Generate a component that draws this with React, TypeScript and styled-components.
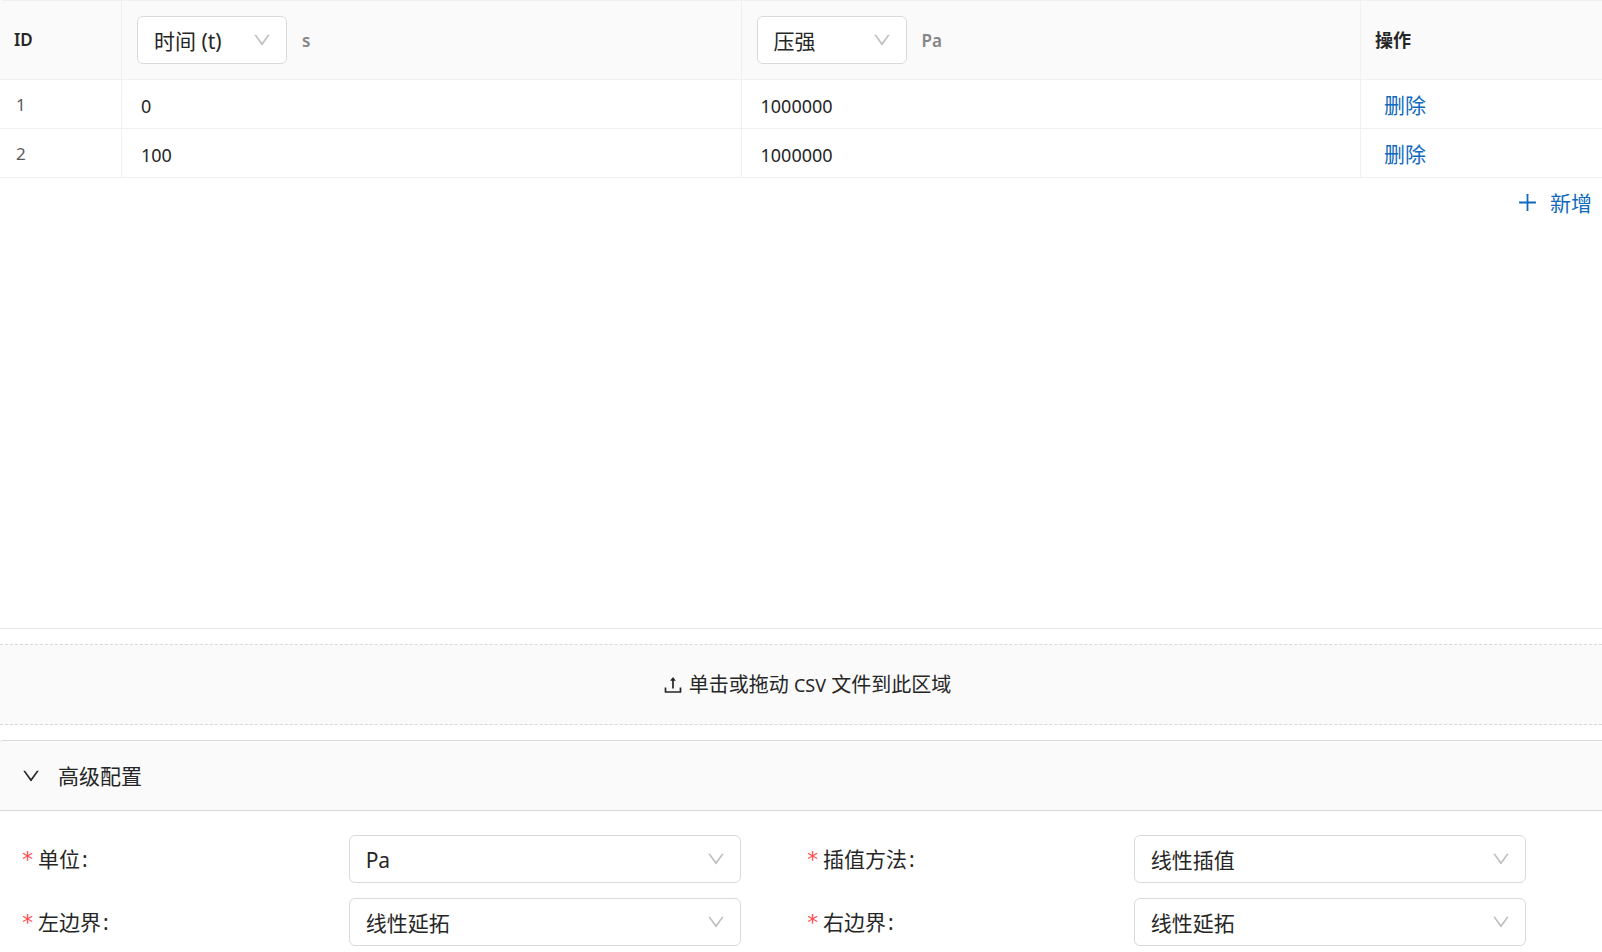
import React, { useState } from 'react';
import styled, { createGlobalStyle } from 'styled-components';

const GlobalStyle = createGlobalStyle`
  *, *::before, *::after { box-sizing: border-box; }
  body {
    margin: 0;
    background: #fff;
    color: #262626;
    font-family: "Noto Sans", "Noto Sans CJK SC", sans-serif;
    font-size: 21px;
    line-height: 32px;
  }
  button, input, select { font: inherit; color: inherit; }
`;

const Page = styled.div`
  display: flex;
  flex-direction: column;
  min-height: 100vh;
  padding-bottom: 6px;
`;

const TableArea = styled.section`
  flex: 1;
  border-bottom: 1px solid #e8e8e8;
`;

const DataTable = styled.table`
  width: 100%;
  table-layout: fixed;
  border-collapse: separate;
  border-spacing: 0;
  border-top: 1px solid #f0f0f0;
  border-radius: 3px 0 0 0;
  overflow: hidden;
`;

const Col = styled.col<{ $width?: number }>`
  width: ${({ $width }) => ($width ? `${$width}px` : 'auto')};
`;

const HeadCell = styled.th<{ $latin?: boolean }>`
  height: 79px;
  padding: 0 14px;
  background: #fafafa;
  border-bottom: 1px solid #f0f0f0;
  border-right: 1px solid #f0f0f0;
  font-size: ${({ $latin }) => ($latin ? 17 : 18)}px;
  font-weight: 600;
  text-align: left;
  &:last-child { border-right: 0; }
`;

const HeadGroup = styled.div`
  display: flex;
  align-items: center;
  gap: 15px;
  padding-left: 1px;
`;

const Unit = styled.span`
  padding-top: 2px;
  color: #858585;
  font-size: 17px;
`;

const Cell = styled.td`
  height: 49px;
  padding: 0 15px;
  border-bottom: 1px solid #f0f0f0;
  border-right: 1px solid #f0f0f0;
  &:last-child { border-right: 0; }
`;

const RowNumber = styled(Cell)`
  padding: 2px 16px 0;
  color: #595959;
  font-size: 17px;
  line-height: 24px;
`;

const CellInput = styled.input`
  display: block;
  width: 100%;
  height: 32px;
  padding: 3px 4px 0;
  border: 0;
  outline: 0;
  background: transparent;
  font-size: 18px;
`;

const TextButton = styled.button`
  display: inline-flex;
  align-items: center;
  gap: 12px;
  height: 48px;
  padding: 2px 8px 0;
  border: 0;
  background: none;
  color: #0f69bd;
  cursor: pointer;
  svg { margin-bottom: 2px; }
`;

const AddBar = styled.div`
  display: flex;
  justify-content: flex-end;
  padding-right: 2px;
`;

const SelectBox = styled.div<{ $width?: string }>`
  position: relative;
  width: ${({ $width }) => $width ?? '100%'};
`;

const NativeSelect = styled.select`
  display: block;
  width: 100%;
  height: 48px;
  padding: 1px 42px 0 16px;
  appearance: none;
  border: 1px solid #d9d9d9;
  border-radius: 6px;
  background: #fff;
  font-size: 21px;
  font-weight: 400;
`;

const SelectArrow = styled.span`
  position: absolute;
  top: 15px;
  right: 16px;
  display: flex;
  color: #bfbfbf;
  pointer-events: none;
`;

const Dropzone = styled.button`
  display: flex;
  align-items: center;
  justify-content: center;
  gap: 6px;
  width: 100%;
  height: 81px;
  margin: 15px 0;
  padding: 0 0 0 12px;
  border: 1px dashed #d9d9d9;
  border-width: 1px 0;
  background: #fafafa;
  font-size: 20px;
  cursor: pointer;
`;

const Latin = styled.span`
  font-size: 18px;
`;

const PanelHeader = styled.button`
  display: flex;
  align-items: center;
  gap: 18px;
  width: 100%;
  height: 71px;
  padding: 0 22px;
  border: 1px solid #d9d9d9;
  border-width: 1px 0;
  border-radius: 3px 0 0 0;
  background: #fafafa;
  text-align: left;
  cursor: pointer;
`;

const Form = styled.form`
  display: grid;
  grid-template-columns: 1fr 1fr;
  gap: 15px 1px;
  padding: 24px 11px 0 22px;
`;

const Field = styled.div`
  display: grid;
  grid-template-columns: 5fr 6fr 1fr;
  align-items: center;
`;

const Label = styled.label`
  display: flex;
  align-items: center;
`;

const Required = styled.span`
  width: 16px;
  color: #ff4d4f;
  font-family: "DejaVu Sans Mono", monospace;
  font-size: 22px;
  line-height: 24px;
  padding-top: 2px;
  margin-left: -1px;
  margin-right: 1px;
`;

const Colon = styled.span`
  padding-left: 2px;
`;

type IconProps = { size: number; paths: string[] };

const Icon = ({ size, paths }: IconProps) => (
  <svg width={size} height={size} viewBox="64 64 896 896" fill="currentColor" aria-hidden="true">
    {paths.map((d) => (
      <path key={d} d={d} />
    ))}
  </svg>
);

const DOWN = [
  'M884 256h-75c-5.1 0-9.9 2.5-12.9 6.6L512 654.2 227.9 262.6c-3-4.1-7.8-6.6-12.9-6.6h-75c-6.5 0-10.3 7.4-6.5 12.7l352.6 486.1c12.8 17.6 39 17.6 51.7 0l352.6-486.1c3.9-5.3.1-12.7-6.4-12.7z',
];
const PLUS = [
  'M482 152h60q8 0 8 8v704q0 8-8 8h-60q-8 0-8-8V160q0-8 8-8z',
  'M160 474h704q8 0 8 8v60q0 8-8 8H160q-8 0-8-8v-60q0-8 8-8z',
];
const UPLOAD = [
  'M400 317.7h73.9V656c0 4.4 3.6 8 8 8h60c4.4 0 8-3.6 8-8V317.7H624c6.7 0 10.4-7.7 6.3-12.9L518.3 163a8 8 0 0 0-12.6 0l-112 141.7c-4.1 5.3-.4 13 6.3 13z',
  'M878 626h-60c-4.4 0-8 3.6-8 8v154H214V634c0-4.4-3.6-8-8-8h-60c-4.4 0-8 3.6-8 8v198c0 17.7 14.3 32 32 32h684c17.7 0 32-14.3 32-32V634c0-4.4-3.6-8-8-8z',
];

type SelectProps = { value: string; id?: string; label?: string; width?: string };

const Select = ({ value, id, label, width }: SelectProps) => (
  <SelectBox $width={width}>
    <NativeSelect id={id} aria-label={label} defaultValue={value}>
      <option value={value}>{value}</option>
    </NativeSelect>
    <SelectArrow>
      <Icon size={18} paths={DOWN} />
    </SelectArrow>
  </SelectBox>
);

const FIELDS = [
  { id: 'unit', label: '单位', value: 'Pa' },
  { id: 'method', label: '插值方法', value: '线性插值' },
  { id: 'left', label: '左边界', value: '线性延拓' },
  { id: 'right', label: '右边界', value: '线性延拓' },
];

type Row = { key: number; time: string; pressure: string };

export default function App() {
  const [rows, setRows] = useState<Row[]>([
    { key: 1, time: '0', pressure: '1000000' },
    { key: 2, time: '100', pressure: '1000000' },
  ]);
  const [open, setOpen] = useState(true);

  const addRow = () => setRows([...rows, { key: Date.now(), time: '', pressure: '' }]);
  const removeRow = (key: number) => setRows(rows.filter((row) => row.key !== key));

  return (
    <Page>
      <GlobalStyle />
      <TableArea>
        <DataTable>
          <colgroup>
            <Col $width={122} />
            <Col />
            <Col />
            <Col $width={241} />
          </colgroup>
          <thead>
            <tr>
              <HeadCell $latin>ID</HeadCell>
              <HeadCell>
                <HeadGroup>
                  <Select value="时间 (t)" label="时间 (t)" width="150px" />
                  <Unit>s</Unit>
                </HeadGroup>
              </HeadCell>
              <HeadCell>
                <HeadGroup>
                  <Select value="压强" label="压强" width="150px" />
                  <Unit>Pa</Unit>
                </HeadGroup>
              </HeadCell>
              <HeadCell>操作</HeadCell>
            </tr>
          </thead>
          <tbody>
            {rows.map((row, index) => (
              <tr key={row.key}>
                <RowNumber>{index + 1}</RowNumber>
                <Cell>
                  <CellInput aria-label="时间 (t)" defaultValue={row.time} />
                </Cell>
                <Cell>
                  <CellInput aria-label="压强" defaultValue={row.pressure} />
                </Cell>
                <Cell>
                  <TextButton type="button" onClick={() => removeRow(row.key)}>
                    删除
                  </TextButton>
                </Cell>
              </tr>
            ))}
          </tbody>
        </DataTable>
        <AddBar>
          <TextButton type="button" onClick={addRow}>
            <Icon size={21} paths={PLUS} />
            新增
          </TextButton>
        </AddBar>
      </TableArea>

      <Dropzone type="button">
        <Icon size={20} paths={UPLOAD} />
        <span>
          单击或拖动 <Latin>CSV</Latin> 文件到此区域
        </span>
      </Dropzone>

      <PanelHeader type="button" aria-expanded={open} onClick={() => setOpen(!open)}>
        <Icon size={18} paths={DOWN} />
        高级配置
      </PanelHeader>
      {open && (
        <Form>
          {FIELDS.map((field) => (
            <Field key={field.id}>
              <Label htmlFor={field.id}>
                <Required>*</Required>
                {field.label}
                <Colon>:</Colon>
              </Label>
              <Select id={field.id} value={field.value} />
            </Field>
          ))}
        </Form>
      )}
    </Page>
  );
}
